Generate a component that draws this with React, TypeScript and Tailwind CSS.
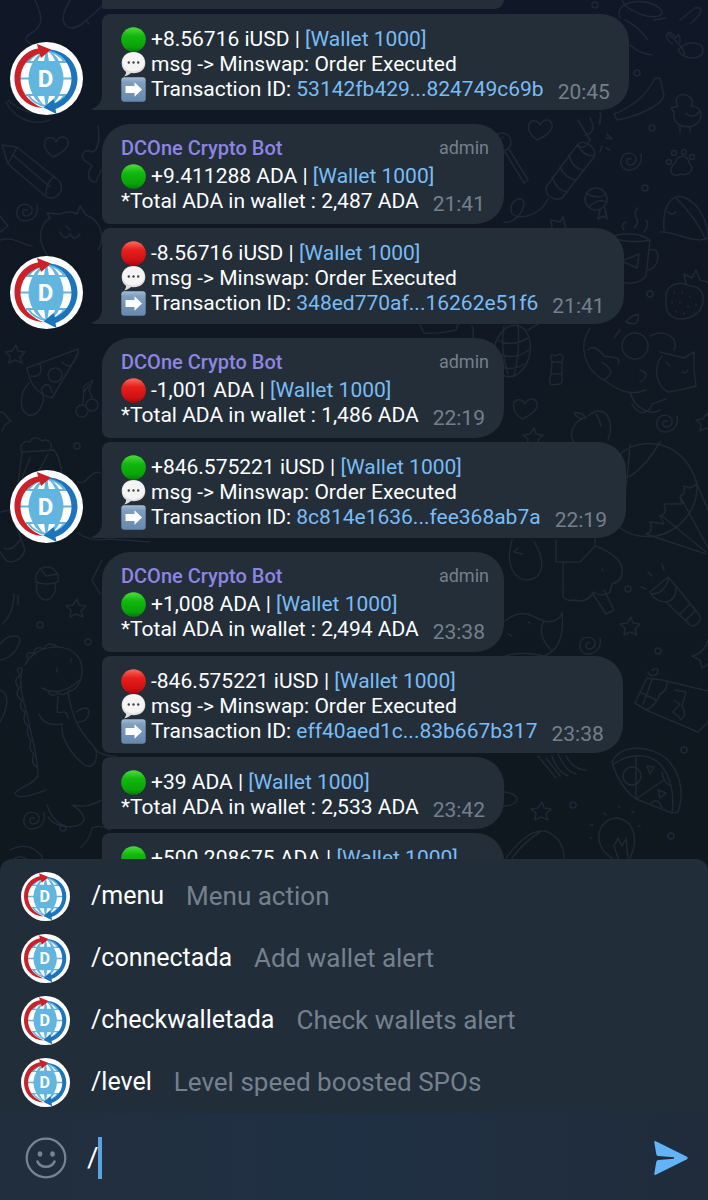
import type { ReactNode } from "react";

type Message = {
  coin: "up" | "down";
  amount: string;
  total?: string;
  tx?: string;
  time?: string;
  header?: boolean;
  avatar?: boolean;
};

const messages: Message[] = [
  { coin: "up", amount: "+8.56716 iUSD", tx: "53142fb429...824749c69b", time: "20:45", avatar: true },
  { coin: "up", amount: "+9.411288 ADA", total: "2,487", time: "21:41", header: true },
  { coin: "down", amount: "-8.56716 iUSD", tx: "348ed770af...16262e51f6", time: "21:41", avatar: true },
  { coin: "down", amount: "-1,001 ADA", total: "1,486", time: "22:19", header: true },
  { coin: "up", amount: "+846.575221 iUSD", tx: "8c814e1636...fee368ab7a", time: "22:19", avatar: true },
  { coin: "up", amount: "+1,008 ADA", total: "2,494", time: "23:38", header: true },
  { coin: "down", amount: "-846.575221 iUSD", tx: "eff40aed1c...83b667b317", time: "23:38" },
  { coin: "up", amount: "+39 ADA", total: "2,533", time: "23:42" },
  { coin: "up", amount: "+500.208675 ADA" },
];

const commands = [
  { name: "/menu", description: "Menu action" },
  { name: "/connectada", description: "Add wallet alert" },
  { name: "/checkwalletada", description: "Check wallets alert" },
  { name: "/level", description: "Level speed boosted SPOs" },
];

function BotAvatar({ className }: { className: string }) {
  return (
    <svg viewBox="2 2 73 73" className={className} aria-hidden="true">
      <circle cx="38.5" cy="38.5" r="36.5" fill="#fff" />
      <g fill="none" stroke="#62b5df" strokeWidth="2">
        <path d="M18 22H59M12 38.5H65M18 55H59" />
        <path d="M38 11C30 12 24 16 20 22M39 11C47 12 53 16 57 22" />
        <path d="M38 66C30 65 24 61 20 55M39 66C47 65 53 61 57 55" />
      </g>
      <path d="M25 22H51Q60 38.5 51 55H25Q16 38.5 25 22Z" fill="#62b5df" />
      <path
        d="M37 11Q29 14 25 22H29Q32 15 37 11ZM40 11Q48 14 51.5 22H47.5Q45 15 40 11ZM37.5 12H39.5L41 22H36ZM37 66Q29 63 25 55H29Q32 62 37 66ZM40 66Q48 63 51.5 55H47.5Q45 62 40 66ZM37.5 65H39.5L41 55H36Z"
        fill="#62b5df"
      />
      <path
        d="M29 4L43 9.5L33 18L31.5 13.5C20 17 12.5 27 12.5 39C12.5 52 22 64 36 68C18 68 6.5 54 6.5 38.5C6.5 23 16 11 30 8.5Z"
        fill="#cb2229"
      />
      <path
        d="M42 9.5C58 11 69.5 23 69.5 38.5C69.5 52 60 65 47.5 69L48.5 74L35.5 67.5L45.5 59L47 63.5C57 59 63.5 50 63.5 39C63.5 25 54 13 42 11Z"
        fill="#1c74bd"
      />
      <text x="37.5" y="47" textAnchor="middle" fontSize="24" fontWeight="700" fill="#fff">
        D
      </text>
    </svg>
  );
}

function Coin({ color }: { color: "up" | "down" }) {
  const id = `coin-${color}`;
  return (
    <svg viewBox="0 0 25 25" className="mr-[5px] size-[25px] shrink-0" role="img" aria-label={color}>
      <defs>
        <linearGradient id={id} x1="0" y1="0" x2="0" y2="1">
          <stop offset="0" stopColor={color === "up" ? "#4fdc3c" : "#ff6a5c"} />
          <stop offset="0.35" stopColor={color === "up" ? "#12b80f" : "#e5211c"} />
          <stop offset="0.8" stopColor={color === "up" ? "#08a308" : "#cf0f12"} />
          <stop offset="1" stopColor={color === "up" ? "#057a08" : "#9c0a0d"} />
        </linearGradient>
      </defs>
      <circle cx="12.5" cy="12.5" r="12.3" fill={`url(#${id})`} />
    </svg>
  );
}

function SpeechIcon() {
  return (
    <svg viewBox="0 0 25 25" className="mr-[5px] size-[25px] shrink-0" aria-hidden="true">
      <path
        d="M12.5 0C19.5 0 24.3 4.500 24.300 11C24.300 17.500 19.500 21.300 12.500 21.300L10 21.100C8 23 5.500 24.300 3 24.600C4.500 23 5.200 21.500 5 19.700C2.300 18 .7 15 .7 11C.7 4.500 5.500 0 12.500 0Z"
        fill="#dededf"
      />
      <path d="M12.5 .5C19 .5 23.500 4.500 23.500 10.500C23.500 16 18.500 19.500 12.500 19.500S1.500 16 1.500 10.500C1.500 4.500 6 .5 12.500 .5Z" fill="#f4f4f4" />
      <g fill="#444">
        <circle cx="7.800" cy="10.500" r="1.200" />
        <circle cx="12.500" cy="10.500" r="1.200" />
        <circle cx="17.200" cy="10.500" r="1.200" />
      </g>
    </svg>
  );
}

function ArrowIcon() {
  return (
    <svg viewBox="0 0 25 25" className="mr-[5px] size-[25px] shrink-0" aria-hidden="true">
      <defs>
        <linearGradient id="arrow-key" x1="0" y1="0" x2="0" y2="1">
          <stop offset="0" stopColor="#a3bdd4" />
          <stop offset="0.2" stopColor="#7f9fbf" />
          <stop offset="1" stopColor="#6688ad" />
        </linearGradient>
      </defs>
      <rect x=".3" y=".3" width="24.400" height="24.400" rx="3" fill="url(#arrow-key)" />
      <path d="M4.500 9H13.500V5.300L21 12.500L13.500 19.700V16H4.500Z" fill="#fff" />
    </svg>
  );
}

function Wallpaper() {
  return (
    <svg
      viewBox="0 0 708 871"
      preserveAspectRatio="xMidYMin slice"
      className="absolute inset-0 h-full w-full"
      aria-hidden="true"
    >
      <defs>
        <path id="heart" d="M-3 11C-10 6-13 1-11-5C-9-10-2-9 0-4C3-10 10-11 12-5C14 1 5 8-3 11Z" />
        <path id="swirl" d="M10-7C12 2 6 9-2 9C-9 9-12 2-9-4C-6-9 3-9 5-3C6 3-1 6-4 2C-5-1-3-3 0-2" />
        <path id="star" d="M1-9L3-3L10-2L5 3L7 9L0 6L-6 9L-5 2L-10-2L-3-3Z" />
        <circle id="dot" r="3" />
      </defs>
      <g fill="none" stroke="#1e2935" strokeWidth="1.500" strokeLinecap="round" strokeLinejoin="round">
        <use href="#heart" x="56" y="146" />
        <use href="#heart" x="540" y="129" />
        <use href="#heart" x="525" y="408" />
        <use href="#swirl" x="27" y="212" />
        <use href="#swirl" x="631" y="161" />
        <use href="#swirl" x="667" y="423" />
        <use href="#swirl" x="590" y="645" />
        <use href="#swirl" x="34" y="820" />
        <use href="#star" x="15" y="354" />
        <use href="#star" x="76" y="608" />
        <use href="#star" x="533" y="437" />
        <use href="#star" x="630" y="626" />
        <use href="#star" x="541" y="811" />
        <use href="#star" x="706" y="422" />
        <use href="#dot" x="595" y="5" />
        <use href="#dot" x="637" y="73" />
        <use href="#dot" x="652" y="128" />
        <use href="#dot" x="645" y="188" />
        <use href="#dot" x="650" y="294" />
        <use href="#dot" x="628" y="589" />
        <use href="#dot" x="658" y="651" />
        <use href="#dot" x="684" y="750" />
        <use href="#dot" x="671" y="836" />
        <use href="#dot" x="573" y="805" />
        <use href="#dot" x="77" y="446" />
        <use href="#dot" x="40" y="625" />
        <use href="#dot" x="88" y="642" />
        <use href="#dot" x="63" y="828" />

        {/* balloon string and pear */}
        <path d="M35 0C42 15 44 25 33 32C22 38 24 42 40 48" />
        <path d="M70 0C64 10 60 20 66 26C73 31 82 25 86 20C92 16 98 10 103 5M86 20L89 24" />
        <path d="M6 102C15 120 35 126 50 120M8 100C20 112 35 116 60 112" />
        {/* pencil */}
        <path d="M2 145L17 147L58 180C64 186 62 195 53 198C48 199 45 196 43 194L8 164ZM17 147L8 164M13 155L50 187M54 177C48 181 46 187 46 194" />
        {/* plane */}
        <path d="M98 126C100 140 98 150 92 152C84 148 80 155 84 160L92 166C86 174 88 182 96 182L101 170" />
        {/* cat head */}
        <path d="M48 256C36 240 40 224 50 218L47 213L60 214Q70 210 77 214L80 206L86 215C100 220 106 236 98 250M66 226L70 230M60 232Q66 242 70 234Q74 242 80 234" />
        <path d="M0 240C12 236 22 244 32 246M0 216L8 226L0 232" />
        {/* pizza slice and egg */}
        <path d="M78 349L27 368C30 386 40 395 52 398L78 354ZM31 376Q44 378 40 364M62 362Q72 372 76 356M41 390Q48 378 52 392" />
        <circle cx="55" cy="375" r="7" />
        <path d="M29 383C20 392 18 410 28 415C40 417 46 400 42 391" />
        {/* cherries */}
        <circle cx="82" cy="411" r="6" />
        <circle cx="92" cy="405" r="6" />
        <path d="M83 404L84 386L93 380L89 390L92 398M84 392L89 385" />
        <path d="M0 412C8 412 6 420 11 421L5 425L2 431" />
        {/* popcorn */}
        <path d="M18 486L22 452C18 444 26 440 30 442C32 436 40 438 42 441C48 438 54 444 50 449C58 450 60 462 62 474M22 452L54 450M34 480L48 454M22 478L30 458" />
        <path d="M0 512L10 510L25 550C22 560 10 566 4 558L0 552M4 548Q12 552 20 540" />
        <path d="M78 533Q90 542 110 539L150 542M78 482Q84 484 88 478Q96 470 100 473" />
        {/* acorn */}
        <path d="M36 582C34 574 40 567 47 567C54 567 60 574 58 582Q47 586 36 582ZM37 584C34 594 42 600 46 600C52 599 57 592 55 584M40 568L46 576L57 574" />
        <path d="M14 594C14 606 10 618 2 624M18 595V605M0 644C8 634 20 634 20 640C18 652 6 660 0 660M0 690C10 694 8 708 0 722" />
        {/* dinosaur */}
        <path d="M25 665C35 644 70 640 80 660C86 676 78 690 68 692C74 730 86 735 96 750C98 760 94 768 86 766C72 756 60 738 62 724" />
        <path d="M48 817C56 829 80 830 84 820C84 812 76 808 72 805C86 808 94 804 102 800M47 805C50 815 56 822 64 826M62 724C50 726 42 722 39 714M68 718C66 708 62 714 57 712L58 696" />
        <path d="M22 668C18 690 24 700 28 718C32 740 38 756 38 776C32 786 20 786 15 793C16 800 30 796 46 790" />
        <path d="M28 659Q24 650 34 654Q34 645 44 649Q48 640 58 647M22 668Q14 666 20 676Q12 680 19 688Q14 696 22 700Q18 708 25 712Q22 722 28 726Q26 736 31 740Q28 750 34 754Q30 764 37 767M42 688Q60 698 80 680M48 692Q52 698 58 693Q64 697 70 690M76 712Q88 704 89 712Q88 722 78 722M57 668V672M71 659V662" />
        <path d="M94 748C98 754 106 756 116 756M92 580L102 560M92 580L100 594M10 850Q28 840 42 856L40 871M80 848Q90 840 92 828Q100 824 110 830M12 862Q20 850 34 866" />

        {/* sleeping fox */}
        <path d="M620 18C612 0 650-4 661 10C666 18 650 18 640 14C630 10 622 4 622-2M613 20L625 40M625 20Q638 26 648 40M630 45Q640 54 652 55M654 20L666 18M668 34C676 40 686 50 684 56M680 20L695 8C706 6 700 16 690 24" />
        <path d="M678 50Q690 38 702 46Q706 56 694 58Q682 58 678 50ZM672 44Q662 36 670 32Q674 36 676 38Q680 30 680 42" />
        <path d="M660 78L664 96C660 108 630 118 617 120L614 114C630 108 646 96 655 78ZM578 120L590 140Q586 150 577 146M600 112Q602 118 599 124" />
        {/* chick */}
        <path d="M678 106C673 98 680 93 686 95C692 97 694 102 691 106C704 106 704 122 693 126C680 129 672 122 674 112L671 108ZM686 113Q692 120 699 112M680 127V132M690 127V132" />
        {/* lollipop */}
        <circle cx="502" cy="142" r="9" />
        <path d="M509 149L528 180L524 183L505 152M503 137Q496 142 503 146" />
        {/* firecracker */}
        <path d="M546 187L578 144C586 138 598 150 594 157L562 198C554 202 545 195 546 187ZM578 144Q582 156 594 156M569 155Q572 168 583 170M560 166Q564 178 576 180M552 177Q556 190 567 192M548 199C540 216 520 220 512 214C508 202 520 194 524 202C524 214 512 224 504 222M600 152L602 146M607 134L612 139L606 138M610 150L606 148" />
        <path d="M590 118Q598 132 585 135M600 117V123" />
        {/* paw */}
        <path d="M675 163C679 152 688 156 689 163C698 172 684 176 681 174C670 179 668 168 675 163Z" />
        <circle cx="669" cy="162" r="2.500" />
        <circle cx="674" cy="153" r="2.500" />
        <circle cx="684" cy="152" r="2.500" />
        <circle cx="692" cy="157" r="2.500" />
        {/* whistle */}
        <circle cx="596" cy="199" r="11" />
        <path d="M587 194Q598 200 606 194M590 206Q598 198 607 202M600 210L598 219L603 216L607 219L605 208" />
        <path d="M552 228L551 220L560 222L563 217L566 229" />
        {/* mug */}
        <path d="M612 236Q635 230 650 240L646 276Q638 286 620 282M612 238Q632 244 650 240M650 250C662 246 660 270 647 270M624 230Q620 224 626 222M634 228Q640 222 636 218Q634 210 638 208M644 232Q650 224 646 220M624 260L639 254L637 268L624 262" />
        {/* watermelon */}
        <path d="M664 230C662 206 672 192 686 198C698 204 708 220 708 238C696 244 680 234 664 232L660 232M676 198C690 212 700 226 706 240M668 212Q672 216 676 212" />
        {/* strawberry */}
        <path d="M666 300C664 284 680 280 690 286C704 286 706 300 700 310C692 320 676 322 669 314Q665 308 666 300ZM686 284L684 274L692 278L696 270L700 280L708 282M674 292V293M682 292V293M690 296V297M672 302V303M680 302V303M688 306V307M696 304V305M676 311V312M684 313V314M694 312V313" />
        {/* pineapple and box */}
        <ellipse cx="512" cy="351" rx="18" ry="26" transform="rotate(12 512 351)" />
        <path d="M498 340Q512 348 528 338M496 352Q512 362 529 350M498 366Q512 372 524 364M504 326Q500 350 508 374M518 324Q520 352 514 376M528 330L538 324M420 325L424 333Q440 334 456 330L458 324M472 326Q474 330 473 338" />
        {/* candy */}
        <path d="M552 362Q549 352 554 356L560 354Q565 356 562 362V374Q563 386 558 384L552 385Q548 384 551 374ZM552 362H562M551 374H562" />
        {/* cat with ball */}
        <circle cx="635" cy="346" r="13" />
        <path d="M590 328C578 345 584 370 604 380C625 396 636 394 646 390M604 380C616 372 610 368 602 362M588 350C592 344 600 350 604 356C612 358 622 356 618 364M626 322Q640 328 638 314Q630 316 626 322ZM650 336C664 328 680 338 674 350M660 352L684 358L694 352L694 370L696 386L680 390L668 392C654 384 654 366 662 356M666 362L670 366M682 372Q686 374 688 370M630 392C634 408 650 416 660 410M640 370Q652 374 640 382M620 330L614 338" />
        {/* peach */}
        <path d="M586 418C570 420 566 442 580 446M586 418Q582 412 574 413Q578 420 586 418ZM588 416C604 402 616 420 608 440M596 414Q600 420 601 426" />
        <path d="M632 404C640 418 650 412 652 404L666 399" />
        {/* parachute */}
        <path d="M620 454C640 436 684 438 697 484C698 506 684 530 656 536C640 538 628 534 620 528M630 444C628 470 626 490 624 500M660 442C648 462 636 474 626 478M697 484L690 488L684 486Q686 494 680 496L682 504L664 504Q668 514 660 516L664 524L650 522Q654 532 646 534M697 484L708 510M680 496L708 548M662 516L706 552M646 534L706 554" />
        {/* ice cream */}
        <path d="M556 540V562H580L595 546V538M563 562V596Q566 602 575 600Q586 604 594 592Q602 598 610 592L612 584Q624 580 622 568Q620 556 596 546M593 594L606 614L614 610L604 590M602 569L603 571" />
        {/* egg */}
        <path d="M512 540C504 568 516 580 528 580C544 578 546 560 534 542M518 548L514 552L522 554" />
        {/* flashlight */}
        <path d="M650 592L668 577L676 586L700 616C702 622 694 628 690 625L666 602C660 602 654 600 650 592ZM652 594Q664 594 669 578M666 602Q676 600 676 588M680 614L690 604M686 620L696 610M641 587L646 589M648 572L652 576M662 564L664 570" />
        {/* fish tail */}
        <path d="M505 621C524 606 534 618 544 621C556 624 562 616 562 612C564 632 560 650 544 656C528 652 510 652 496 660M544 621Q536 634 551 650M528 622L530 623M508 634L512 636" />
        {/* chocolate */}
        <path d="M635 703L647 678L662 680L708 691M635 703L646 710L698 732L708 722M640 692L656 700M652 680L643 704M646 710Q656 706 660 694Q668 690 667 680M675 690L686 692L682 706Q688 716 680 720M674 700L680 704L673 712L680 718M652 670Q660 666 657 674Q650 678 648 672M708 640Q704 654 692 656L700 660L702 668L708 664" />
        {/* pizza */}
        <path d="M612 762C620 744 650 744 668 760C682 776 684 796 678 812L672 813L636 799C624 790 616 776 612 762ZM614 764C630 752 650 754 660 764C672 778 674 796 672 813M636 756V799L664 780" />
        <circle cx="632" cy="776" r="9" />
        <path d="M662 772Q664 784 671 786M650 804Q658 796 662 808M647 766L654 767L650 774ZM658 790L666 793L660 798Z" />
        <path d="M538 756L556 778M546 758L560 776M552 756Q556 770 568 776M558 754Q566 772 576 774M566 756Q574 770 586 770M504 792Q518 794 517 800Q514 806 504 806" />
        {/* bulb */}
        <path d="M612 858C592 846 596 820 616 818C636 820 638 842 630 858M618 858L614 846L618 838L622 846L626 838L628 858M604 813L606 815M619 806V808M632 813L634 811M590 825H593M590 838H592M638 826H640" />
        <path d="M506 858Q530 826 548 832Q564 840 564 858M512 858Q524 842 540 832" />
      </g>
    </svg>
  );
}

function Line({ children }: { children: ReactNode }) {
  return <div className="flex h-[25px] items-center whitespace-pre">{children}</div>;
}

function Time({ value }: { value?: string }) {
  return (
    <time className="mr-1 -mb-[3px] ml-auto self-end pl-3.5 leading-[25px] text-[#73808b]">
      {value}
    </time>
  );
}

function bubbleShape({ header, avatar, time }: Message) {
  if (header) return "rounded-l-[28px] rounded-r-[28px] rounded-bl-lg pt-3 pb-2.5";
  if (avatar) return "rounded-tl-lg rounded-r-[28px] pt-[13px] pb-2";
  if (!time) return "min-w-[402px] rounded-tl-lg rounded-tr-[28px] pt-[13px] pb-2";
  return "rounded-l-lg rounded-r-[28px] pt-[13px] pb-[9px]";
}

function Bubble({ message }: { message: Message }) {
  const { coin, amount, total, tx, time, header, avatar } = message;

  return (
    <li className={header ? "flex items-end pt-2.5" : "flex items-end"}>
      <div className="w-[102px] shrink-0 pl-2.5">
        {avatar && <BotAvatar className="-mb-[5px] size-[73px]" />}
      </div>
      <article className={`relative bg-[#232e39] pr-[15px] pl-[19px] text-[21px] ${bubbleShape(message)}`}>
        {avatar && (
          <svg viewBox="0 0 10 16" className="absolute bottom-0 -left-2.5 h-4 w-2.5" aria-hidden="true">
            <path d="M10 0C10 8 6 13 0 14.500Q0 16 2 16H10Z" fill="#232e39" />
          </svg>
        )}
        {header && (
          <header className="mb-1 flex h-6 items-center justify-between">
            <h2 className="text-xl font-medium text-[#8e85e2]">DCOne Crypto Bot</h2>
            <span className="text-lg text-[#73808b]">admin</span>
          </header>
        )}
        <Line>
          <Coin color={coin} />
          {amount + " | "}
          <a href="#wallet" className="text-[#7abcf4]">[Wallet 1000]</a>
        </Line>
        {tx && (
          <>
            <Line>
              <SpeechIcon />
              {"msg -> Minswap: Order Executed"}
            </Line>
            <Line>
              <ArrowIcon />
              {"Transaction ID: "}
              <a href="#transaction" className="text-[#7abcf4]">{tx}</a>
              <Time value={time} />
            </Line>
          </>
        )}
        {total && (
          <Line>
            {`*Total ADA in wallet : ${total} ADA`}
            <Time value={time} />
          </Line>
        )}
      </article>
    </li>
  );
}

export default function App() {
  return (
    <div className="flex h-screen flex-col overflow-hidden bg-[#0f1720] font-['Roboto',sans-serif] text-white">
      <main className="relative min-h-0 flex-1 overflow-hidden bg-linear-to-b from-[#101726] via-[#101822] to-[#0f171f]">
        <Wallpaper />
        <div className="relative">
          <div className="ml-[102px] h-[9px] w-[402px] rounded-bl-lg rounded-br-[28px] bg-[#232e39]" />
          <ul className="flex flex-col gap-1 pt-[5px]">
            {messages.map((message) => (
              <Bubble key={message.amount} message={message} />
            ))}
          </ul>
        </div>
      </main>

      <section className="relative -mt-3 rounded-t-xl bg-[#222d3a] pt-1.5" aria-label="Bot commands">
        <ul>
          {commands.map((command) => (
            <li key={command.name}>
              <button type="button" className="flex h-[62px] w-full items-center pl-[21px] text-left">
                <BotAvatar className="size-[49px] shrink-0" />
                <span className="ml-[21px] text-[25px]">{command.name}</span>
                <span className="ml-[22px] text-[26px] text-[#75818d]">{command.description}</span>
              </button>
            </li>
          ))}
        </ul>
      </section>

      <form className="flex h-[87px] shrink-0 items-center bg-linear-to-r from-[#212e3d] via-[#203044] to-[#202c3b] pt-0.5 pr-[19px] pl-[25px]">
        <button type="button" aria-label="Emoji">
          <svg viewBox="0 0 42 42" className="size-[42px]" fill="none" stroke="#778492">
            <circle cx="21" cy="21" r="19.300" strokeWidth="2.200" />
            <path d="M12.500 24.500C15.500 31.500 26.500 31.500 29.500 24.500" strokeWidth="2.600" strokeLinecap="round" />
            <ellipse cx="15" cy="17" rx="2.300" ry="2.800" fill="#778492" stroke="none" />
            <ellipse cx="27.500" cy="17" rx="2.300" ry="2.800" fill="#778492" stroke="none" />
          </svg>
        </button>
        <div className="relative ml-5 flex-1">
          <input
            aria-label="Message"
            defaultValue="/"
            className="h-[42px] w-full bg-transparent text-[28px] text-white outline-none"
          />
          <span className="absolute top-0 left-[11px] h-[42px] w-1 bg-[#5aa3e0]" />
        </div>
        <button type="submit" aria-label="Send">
          <svg viewBox="0 0 36 36" className="size-9" fill="#63b4f6">
            <path d="M2.800 1.200L34 16.800Q35.800 18 34 19.200L2.800 34.800Q1 35.300 1.300 33.500L3.300 21.800Q3.700 20 5.500 19.900L21 18.700V17.300L5.500 16.100Q3.700 16 3.300 14.200L1.300 2.500Q1 .7 2.800 1.200Z" />
          </svg>
        </button>
      </form>
    </div>
  );
}
